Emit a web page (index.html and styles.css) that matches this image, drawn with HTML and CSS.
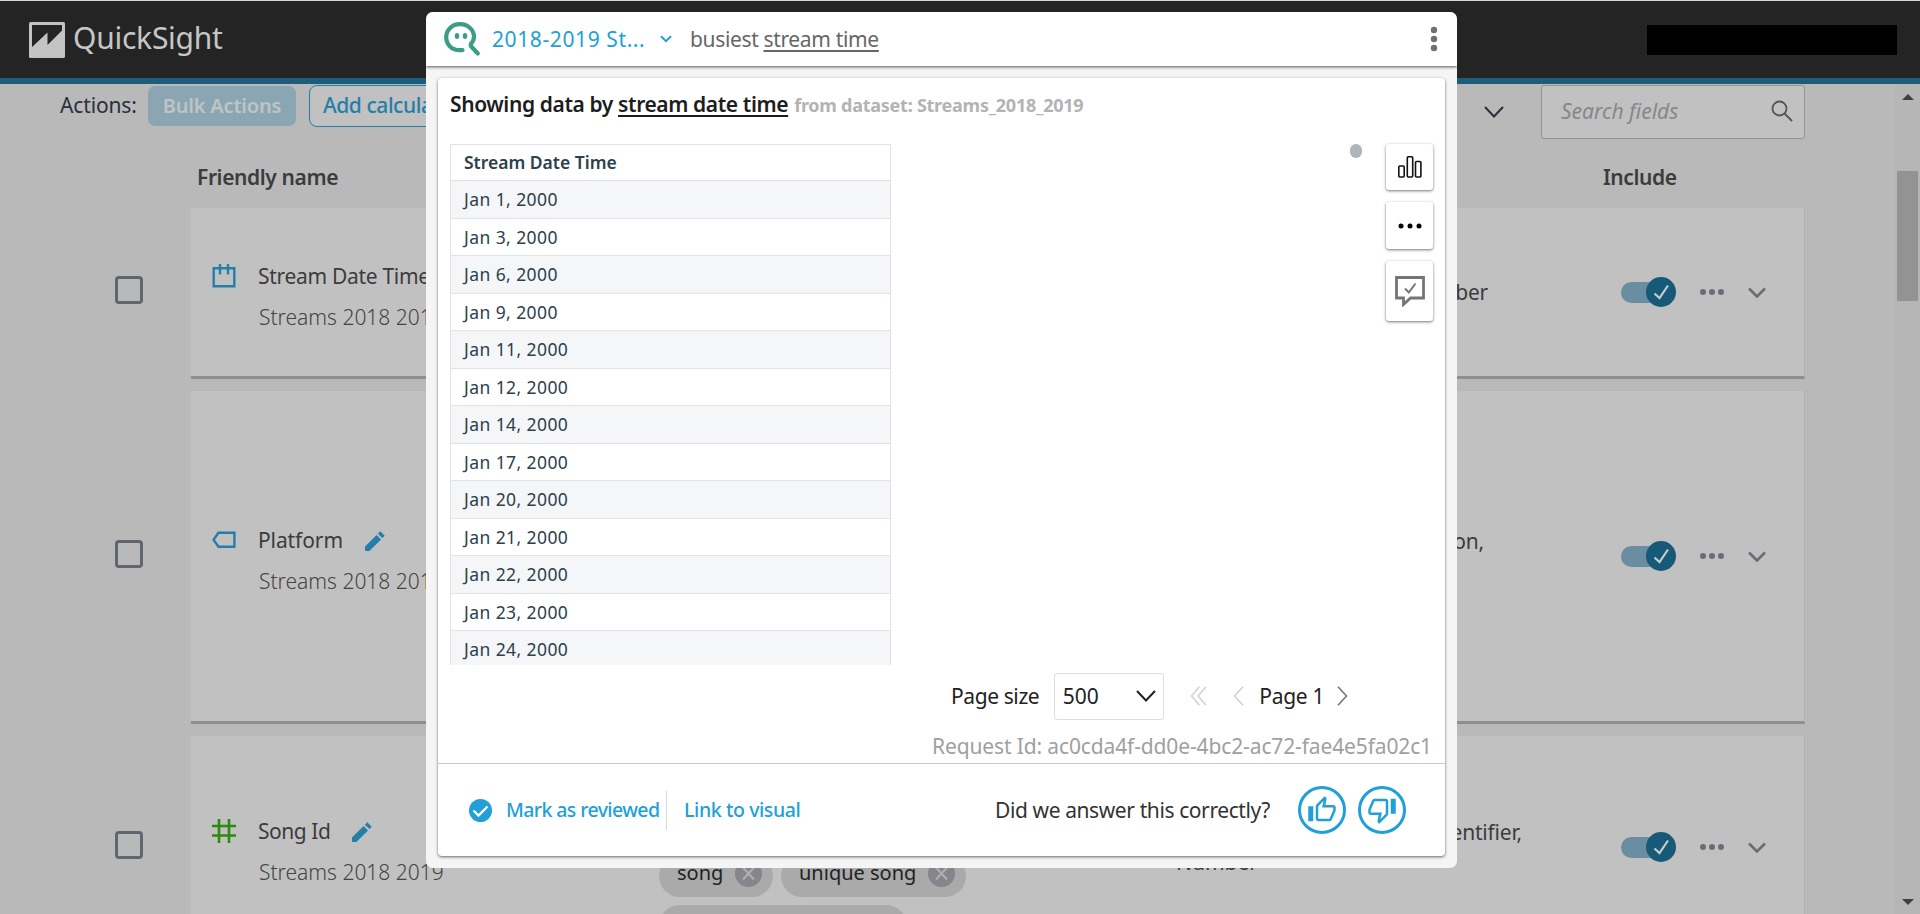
FILE: index.html
```html
<!DOCTYPE html>
<html lang="en">
<head>
<meta charset="utf-8">
<title>QuickSight</title>
<link rel="stylesheet" href="styles.css">
</head>
<body>
<svg width="0" height="0" class="defs">
  <symbol id="pencil" viewBox="0 0 21 21"><path d="M0 16.600 11.600 5l4.400 4.400L4.400 21H0zM12.900 3.700 15.300 1.300l4.400 4.400-2.400 2.400z"/></symbol>
  <symbol id="check" viewBox="0 0 30 30"><path d="M8.500 16.500l5 4.500L22 8.500" fill="none" stroke="#c6cbd0" stroke-width="2.200"/></symbol>
  <symbol id="chev" viewBox="0 0 18 11"><path d="M1 1.500l8 8 8-8" fill="none" stroke="currentColor" stroke-width="2.600"/></symbol>
  <symbol id="cross" viewBox="0 0 27 27"><circle cx="13.500" cy="13.500" r="13.500" fill="#85868b"/><path d="M8 7.500l11 12M19 7.500l-11 12" stroke="#b0b0b0" stroke-width="2"/></symbol>
</svg>

<header class="topbar">
  <svg class="logo" width="36" height="36" viewBox="0 0 36 36"><rect width="36" height="36" rx="1.500" fill="#c3c3c3"/><path d="M3 3h30v5.500L18.500 23V10.500L3 25z" fill="#242424"/></svg>
  <span class="brand">QuickSight</span>
  <span class="account"></span>
</header>

<div class="workspace">
  <main class="fields">
    <div class="toolbar">
      <span class="actions-label">Actions:</span>
      <button class="bulk">Bulk Actions</button>
      <button class="add">Add calculated</button>
      <svg class="filter-chev" width="20" height="12" viewBox="0 0 20 12"><path d="M1 1l9 9.500L19 1" fill="none" stroke="#25323c" stroke-width="2"/></svg>
      <div class="search"><span>Search fields</span><svg width="22" height="22" viewBox="0 0 22 22" fill="none" stroke="#555" stroke-width="1.800"><circle cx="8.500" cy="8.500" r="7"/><path d="M13.500 13.500L21 21"/></svg></div>
    </div>
    <div class="thead"><span class="th-name">Friendly name</span><span>Include</span></div>

    <div class="row row-date">
      <div class="pick"><span class="box"></span></div>
      <div class="card">
        <div class="field">
          <div class="name"><svg width="24" height="24" viewBox="0 0 24 24" fill="none" stroke="#237fa9" stroke-width="2.400"><path d="M1.700 4.200h20.600v18.100H1.700z"/><path d="M8 0v10.500M16 0v10.500"/></svg><span>Stream Date Time</span></div>
          <div class="source">Streams 2018 2019</div>
        </div>
        <div class="tags"></div>
        <div class="desc"><span class="d1">Number</span></div>
        <div class="toggle"><svg width="30" height="30"><use href="#check"/></svg></div>
        <div class="dots"><i></i><i></i><i></i></div>
        <svg class="expand" width="18" height="11"><use href="#chev"/></svg>
      </div>
    </div>

    <div class="row row-platform">
      <div class="pick"><span class="box"></span></div>
      <div class="card">
        <div class="field">
          <div class="name"><svg width="24" height="18" viewBox="0 0 24 18" fill="none" stroke="#237fa9" stroke-width="2.400"><path d="M6.500 1.800h15.900v14H6.500L1.500 8.800z"/></svg><span>Platform</span><svg class="edit" width="21" height="21"><use href="#pencil"/></svg></div>
          <div class="source">Streams 2018 2019</div>
        </div>
        <div class="tags"></div>
        <div class="desc"><span class="d2">Location,</span><span class="dn">Number</span></div>
        <div class="toggle"><svg width="30" height="30"><use href="#check"/></svg></div>
        <div class="dots"><i></i><i></i><i></i></div>
        <svg class="expand" width="18" height="11"><use href="#chev"/></svg>
      </div>
    </div>

    <div class="row row-song">
      <div class="pick"><span class="box"></span></div>
      <div class="card">
        <div class="field">
          <div class="name"><svg width="24" height="24" viewBox="0 0 24 24" fill="none" stroke="#2c8a0c" stroke-width="2.600"><path d="M7 0v24M17 0v24M0 7h24M0 16.500h24"/></svg><span>Song Id</span><svg class="edit" width="21" height="21"><use href="#pencil"/></svg></div>
          <div class="source">Streams 2018 2019</div>
        </div>
        <div class="tags">
          <div class="chip">song<svg width="27" height="27"><use href="#cross"/></svg></div>
          <div class="chip chip-unique">unique song<svg width="27" height="27"><use href="#cross"/></svg></div>
          <div class="chip chip-wide"></div>
        </div>
        <div class="desc"><span class="d3">Unique Identifier,</span><span class="dn">Number</span></div>
        <div class="toggle"><svg width="30" height="30"><use href="#check"/></svg></div>
        <div class="dots"><i></i><i></i><i></i></div>
        <svg class="expand" width="18" height="11"><use href="#chev"/></svg>
      </div>
    </div>
  </main>
  <div class="scrollbar"><span class="up"></span><span class="thumb"></span><span class="down"></span></div>
</div>

<section class="modal">
  <div class="ask">
    <svg class="qicon" width="38" height="36" viewBox="0 0 38 36" fill="none" stroke="#3a9e86" stroke-width="4.200" stroke-linecap="round" stroke-linejoin="round"><path d="M19.500 29.200H16.500C9 29.200 3.200 23.500 3.200 16.200 3.200 9 9 3.200 17 3.200s14 5.800 14 12.500c0 3-1.200 5.200-3.200 7.300v2l7 7.500"/><g fill="#3a9e86" stroke="none"><ellipse cx="14" cy="15" rx="2.300" ry="3"/><ellipse cx="22" cy="15" rx="2.300" ry="3"/></g></svg>
    <span class="topic">2018-2019 St...</span>
    <svg class="topic-chev" width="12" height="8" viewBox="0 0 12 8"><path d="M1 1.200l5 5 5-5" fill="none" stroke="#219fd9" stroke-width="2"/></svg>
    <span class="question">busiest <u>stream time</u></span>
    <svg class="kebab" width="8" height="26" viewBox="0 0 8 26" fill="#707070"><circle cx="4" cy="4" r="3.200"/><circle cx="4" cy="13" r="3.200"/><circle cx="4" cy="22" r="3.200"/></svg>
  </div>
  <div class="answer">
    <div class="title"><span class="t-main">Showing data by <u>stream date time</u></span><span class="t-src">from dataset: Streams_2018_2019</span></div>
    <div class="result">
      <div class="table">
        <div class="hd">Stream Date Time</div>
        <div>Jan 1, 2000</div><div>Jan 3, 2000</div><div>Jan 6, 2000</div><div>Jan 9, 2000</div><div>Jan 11, 2000</div><div>Jan 12, 2000</div><div>Jan 14, 2000</div><div>Jan 17, 2000</div><div>Jan 20, 2000</div><div>Jan 21, 2000</div><div>Jan 22, 2000</div><div>Jan 23, 2000</div><div>Jan 24, 2000</div>
      </div>
      <span class="grip"></span>
      <div class="tools">
        <button class="tool t1"><svg width="24" height="22" viewBox="0 0 24 22" fill="none" stroke="#111" stroke-width="1.600"><rect x=".8" y="10" width="5.400" height="11" rx="1"/><rect x="9.300" y=".8" width="5.400" height="20.200" rx="1"/><rect x="17.500" y="5.500" width="5.400" height="15.500" rx="1"/></svg></button>
        <button class="tool"><svg width="24" height="6" viewBox="0 0 24 6"><circle cx="3" cy="3" r="2.500"/><circle cx="12" cy="3" r="2.500"/><circle cx="21" cy="3" r="2.500"/></svg></button>
        <button class="tool t3"><svg width="30" height="31" viewBox="0 0 30 31" fill="none" stroke="#757575" stroke-width="2.800"><path d="M1.500 1.500h27v20.500H15.500l-7 6.500V22h-7z"/><path d="M10 12.500l3.800 4L20.500 7.500" stroke-width="2"/></svg></button>
      </div>
    </div>
    <div class="pager">
      <span class="ps">Page size</span>
      <div class="select"><span>500</span><svg width="20" height="12" viewBox="0 0 20 12"><path d="M1 1l9 9.500L19 1" fill="none" stroke="#222" stroke-width="2"/></svg></div>
      <svg class="first" width="17" height="20" viewBox="0 0 17 20" fill="none" stroke="#d0d0d0" stroke-width="1.500"><path d="M9.500 .8L1.500 10l8 9.200M16 .8L8 10l8 9.200"/></svg>
      <svg class="prev" width="11" height="20" viewBox="0 0 11 20" fill="none" stroke="#d0d0d0" stroke-width="1.500"><path d="M10 .8L1.500 10l8.500 9.200"/></svg>
      <span class="pn">Page 1</span>
      <svg class="next" width="11" height="20" viewBox="0 0 11 20" fill="none" stroke="#777" stroke-width="1.600"><path d="M1 .8L9.500 10 1 19.200"/></svg>
    </div>
    <div class="request">Request Id: ac0cda4f-dd0e-4bc2-ac72-fae4e5fa02c1</div>
    <div class="footer">
      <svg width="23" height="23" viewBox="0 0 23 23"><circle cx="11.500" cy="11.500" r="11.500" fill="#219fd9"/><path d="M4.500 11.500l5 5 9-9" fill="none" stroke="#fff" stroke-width="2.300"/></svg>
      <a class="mark">Mark as reviewed</a>
      <span class="sep"></span>
      <a class="link">Link to visual</a>
      <span class="ask-fb">Did we answer this correctly?</span>
      <button class="fb"><svg width="30" height="30" viewBox="0 0 24 24"><path d="M9 21h9c.83 0 1.540-.5 1.840-1.220l3.020-7.050c.09-.23.14-.47.14-.73v-2c0-1.100-.9-2-2-2h-6.310l.95-4.570.03-.32c0-.41-.17-.79-.44-1.060L14.170 1 7.580 7.590C7.220 7.950 7 8.450 7 9v10c0 1.100.9 2 2 2zM9 9l4.340-4.340L12 10h9v2l-3 7H9V9zM1 9h4v12H1z"/></svg></button>
      <button class="fb"><svg width="30" height="30" viewBox="0 0 24 24"><path d="M15 3H6c-.83 0-1.540.5-1.840 1.220l-3.020 7.050c-.09.23-.14.47-.14.73v2c0 1.100.9 2 2 2h6.310l-.95 4.570-.03.32c0 .41.17.79.44 1.060L9.830 23l6.590-6.590c.36-.36.58-.86.58-1.410V5c0-1.100-.9-2-2-2zm0 12l-4.340 4.340L12 14H3v-2l3-7h9v10zm4-12h4v12h-4z"/></svg></button>
    </div>
  </div>
</section>
</body>
</html>
```
FILE: styles.css
```css
* { box-sizing: border-box; }
html, body { margin: 0; height: 914px; overflow: hidden; }
body { position: relative; background: #b9b9b9; font: 21px "Noto Sans", sans-serif; color: #3c3c3c; white-space: nowrap; }
button { font: inherit; padding: 0; margin: 0; }
svg { display: block; flex: none; }
.defs { position: absolute; }

.topbar { height: 84px; border-top: 1px solid #cfd8dd; border-bottom: 6px solid #1c5d7b; background: #242424; display: flex; align-items: center; padding: 0 23px 0 29px; }
.brand { font-size: 30px; line-height: 40px; color: #c6c6c6; margin: 0 auto 3px 8px; letter-spacing: -.25px; }
.account { width: 250px; height: 30px; background: #000; }

.workspace { display: flex; height: 830px; }
.fields { flex: 1; overflow: hidden; }
.toolbar { height: 55px; display: flex; align-items: flex-start; padding-left: 60px; }
.actions-label { width: 88px; line-height: 42px; color: #2a303c; letter-spacing: -.15px; }
.bulk { width: 148px; height: 40px; margin-top: 2px; padding-bottom: 2px; border: 0; border-radius: 7px; background: #8ba6b3; color: #bfc4c7; font-weight: 600; font-size: 20px; letter-spacing: -.2px; }
.add { width: 160px; height: 42px; margin: 1px 0 0 13px; border: 1px solid #237fa9; border-radius: 8px; background: #c1c1c1; color: #237fa9; text-align: left; padding: 0 0 2px 13px; font-weight: 500; letter-spacing: -.45px; }
.filter-chev { margin: 22px 37px 0 auto; }
.search { width: 264px; height: 54px; margin: 1px 90px 0 0; border: 1px solid #959595; border-radius: 3px; background: #c1c1c1; display: flex; align-items: center; justify-content: space-between; padding: 0 11px 2px 19px; font-style: italic; color: #85888c; }
.thead { height: 69px; display: flex; padding: 23px 0 0 197px; line-height: 30px; font-weight: 600; letter-spacing: -.4px; }
.th-name { width: 1406px; }

.row { display: flex; margin-bottom: 12px; width: 1805px; }
.row-date { height: 171px; }
.row-platform { height: 333px; }
.row-song { height: 225px; }
.pick { width: 191px; display: flex; align-items: center; padding: 0 0 7px 115px; }
.box { width: 28px; height: 28px; border: 3px solid #60666d; border-radius: 4px; }
.card { flex: 1; background: #c1c1c1; border-bottom: 3px solid #8f8f8f; border-right: 1px solid #b2b2b2; display: flex; align-items: center; padding-left: 21px; }
.field { width: 447px; padding-top: 9px; line-height: 41px; }
.name { display: flex; align-items: center; letter-spacing: -.1px; }
.row-date .name { letter-spacing: -.3px; }
.row-song .name { letter-spacing: -.45px; }
.name span { margin-left: 22px; }
.edit { margin-left: 22px; fill: #237fa9; }
.source { margin-left: 47px; font-weight: 300; color: #444; }
.tags { width: 517px; display: flex; flex-wrap: wrap; gap: 8px; align-self: flex-start; }
.row-song .tags { margin-top: 119px; }
.chip { height: 42px; width: 114px; border-radius: 21px; background: #aaa; color: #222; display: flex; align-items: center; justify-content: space-between; padding: 0 11px 6px 18px; font-size: 20px; line-height: 36px; }
.chip-unique { width: 185px; }
.chip-wide { width: 248px; }
.desc { width: 445px; line-height: 30px; display: flex; flex-direction: column; }
.d1, .d2, .d3 { text-align: right; width: 312px; letter-spacing: -.2px; }
.d2 { width: 308px; }
.d3 { width: 346px; }
.toggle { width: 45px; height: 21px; border-radius: 11px; background: #6b8da2; display: flex; align-items: center; justify-content: flex-end; margin-right: 34px; }
.toggle svg { background: #175a78; border-radius: 50%; margin-right: -10px; }
.dots { display: flex; gap: 3px; margin-right: 24px; }
.dots i { width: 6px; height: 6px; border-radius: 50%; background: #6a6d77; }
.expand { color: #6a6d77; }

.scrollbar { width: 25px; background: #b6b6b6; display: flex; flex-direction: column; align-items: center; padding: 10px 0 9px; }
.up, .down { border: 6px solid transparent; border-top: 0; border-bottom: 6px solid #404040; }
.down { border-bottom: 0; border-top: 6px solid #404040; margin-top: auto; }
.thumb { width: 21px; height: 130px; background: #939393; margin-top: 71px; }

.modal { position: absolute; left: 426px; top: 12px; width: 1031px; height: 856px; background: #f5f5f5; border-radius: 7px; overflow: hidden; }
.ask { position: relative; height: 54px; background: #fff; box-shadow: 0 1px 3px rgba(0,0,0,.65); display: flex; align-items: center; padding: 0 19px 0 17px; margin-bottom: 12px; }
.topic { width: 168px; margin-left: 11px; color: #219fd9; letter-spacing: .6px; }
.question { margin: 0 auto 0 18px; color: #666; letter-spacing: -.35px; }
.topic, .question { padding-bottom: 1px; }
u { text-decoration-thickness: 2px; text-underline-offset: 3px; }
.answer { margin: 0 12px; height: 778px; background: #fff; border-radius: 4px; box-shadow: 0 1px 3px rgba(0,0,0,.6); }
.title { height: 66px; padding: 11px 0 0 12px; line-height: 30px; font-weight: 600; color: #1d1d1d; display: flex; letter-spacing: -.39px; }
.t-src { color: #b3b3b3; font-size: 18px; font-weight: 700; margin-left: 6px; line-height: 32px; letter-spacing: -.25px; }
.result { height: 521px; display: flex; align-items: flex-start; padding: 0 12px 0 12px; }
.table { width: 441px; height: 521px; overflow: hidden; border: 1px solid #e0e4e8; border-bottom: 0; font-size: 17.500px; color: #2d404d; letter-spacing: .42px; }
.table div { height: 37px; line-height: 36px; border-bottom: 1px solid #e0e4e8; padding-left: 13px; }
.table .hd { height: 36px; line-height: 35px; font-weight: 600; letter-spacing: 0; }
.table div:nth-child(even) { height: 38px; background: #f4f6f8; }
.grip { width: 12px; height: 14px; border-radius: 6px; background: #acb6bd; margin: 0 24px 0 auto; }
.tools { width: 47px; display: flex; flex-direction: column; gap: 12px; }
.tool { height: 47px; border: 0; border-radius: 3px; background: #fff; box-shadow: 0 1px 3px rgba(0,0,0,.55); display: flex; align-items: center; justify-content: center; }
.t1 { height: 46px; }
.t3 { height: 60px; }
.pager { height: 62px; display: flex; align-items: center; padding: 0 97px 0 513px; color: #222; }
.ps { width: 103px; letter-spacing: -.4px; }
.select { width: 111px; height: 47px; border: 1px solid #ddd; border-radius: 3px; display: flex; align-items: center; justify-content: space-between; padding: 0 7px 0 8px; }
.first { margin: 0 26px 0 26px; }
.pn { width: 78px; margin-left: 15px; letter-spacing: -.3px; }
.request { height: 37px; line-height: 38px; text-align: right; padding-right: 13px; border-bottom: 1px solid #c8c8c8; color: #a0a0a0; letter-spacing: -.13px; }
.footer { height: 92px; display: flex; align-items: center; padding: 0 39px 0 31px; color: #333; }
.mark { margin-left: 14px; width: 160px; letter-spacing: -.6px; }
.mark, .link { color: #219fd9; font-weight: 500; font-size: 19.500px; padding-bottom: 1px; }
.sep { width: 1px; height: 39px; background: #d8d8d8; }
.link { margin: 0 auto 0 17px; letter-spacing: -.4px; }
.ask-fb { width: 303px; letter-spacing: -.4px; padding-bottom: 1px; }
.fb { width: 48px; height: 48px; border: 3px solid #219fd9; border-radius: 50%; background: #fff; fill: #219fd9; display: flex; align-items: center; justify-content: center; }
.fb + .fb { margin-left: 12px; }
```
